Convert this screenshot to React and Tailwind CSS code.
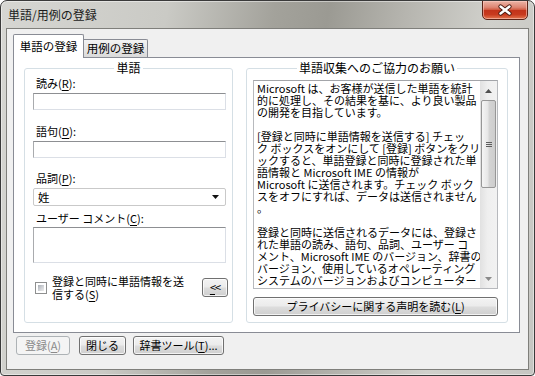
import React from 'react'

const btn =
  'flex items-center justify-center rounded-[3px] border border-[#707070] bg-[linear-gradient(to_bottom,#f3f3f3_0%,#ebebeb_48%,#dddddd_52%,#cfcfcf_100%)] shadow-[inset_0_0_0_1px_rgba(255,255,255,0.75)] text-[11px] leading-[13px] text-black'

const infoLines = [
  'Microsoft は、お客様が送信した単語を統計',
  '的に処理し、その結果を基に、より良い製品',
  'の開発を目指しています。',
  '',
  '[登録と同時に単語情報を送信する] チェッ',
  'ク ボックスをオンにして [登録] ボタンをクリ',
  'ックすると、単語登録と同時に登録された単',
  '語情報と Microsoft IME の情報が',
  'Microsoft に送信されます。チェック ボック',
  'スをオフにすれば、データは送信されません',
  '。',
  '',
  '登録と同時に送信されるデータには、登録さ',
  'れた単語の読み、語句、品詞、ユーザー コ',
  'メント、Microsoft IME のバージョン、辞書の',
  'バージョン、使用しているオペレーティング',
  'システムのバージョンおよびコンピューター',
]

function Mn({ children }) {
  return <span className="underline underline-offset-[2px]">{children}</span>
}

function GroupBox({ title, className, children }) {
  return (
    <div className={`flex flex-col rounded-[3px] border border-[#d5dfe5] ${className}`}>
      <div className="-mt-[8px] flex justify-center">
        <span className="bg-white px-[2px] text-[12px] leading-[14px]">{title}</span>
      </div>
      {children}
    </div>
  )
}

function Field({ className }) {
  return (
    <div
      className={`ml-[8px] w-[193px] border border-[#dbdfe6] border-t-[#8d8f92] border-l-[#a9abae] bg-white ${className}`}
    />
  )
}

function CloseButton() {
  return (
    <div className="mr-[6px] -mt-px flex h-[20px] w-[46px] items-center justify-center rounded-b-[5px] border border-[#5c2418] bg-[linear-gradient(to_bottom,#ecb4a6_0%,#de8673_35%,#d25c43_48%,#c2331a_52%,#c83a1e_75%,#e3764f_100%)] shadow-[inset_0_0_0_1px_rgba(255,210,200,0.55)]">
      <svg width="16" height="12" viewBox="0 0 16 12" aria-hidden="true">
        <path d="M3.5 2.5 L12.5 9.5 M12.5 2.5 L3.5 9.5" stroke="#4a1a10" strokeWidth="4.2" strokeLinecap="round" />
        <path d="M3.5 2.5 L12.5 9.5 M12.5 2.5 L3.5 9.5" stroke="#ffffff" strokeWidth="2.4" strokeLinecap="round" />
      </svg>
    </div>
  )
}

function Triangle({ down, color = '#4a4a4a' }) {
  return (
    <svg width="7" height="4" viewBox="0 0 7 4" aria-hidden="true">
      <polygon points={down ? '0,0 7,0 3.5,4' : '0,4 7,4 3.5,0'} fill={color} />
    </svg>
  )
}

function ScrollBar() {
  return (
    <div className="flex w-[17px] flex-col bg-[linear-gradient(to_right,#e1e1e1,#efefef_45%,#f2f2f2)]">
      <div className="flex h-[17px] items-center justify-center pt-[2px]">
        <Triangle color="#505050" />
      </div>
      <div className="mx-px mt-[2px] flex h-[88px] flex-col items-center justify-center gap-px rounded-[2px] border border-[#979797] bg-[linear-gradient(to_right,#f5f5f5,#e6e6e6_45%,#d4d4d4_55%,#cdcdcd)]">
        <div className="h-px w-[6px] bg-[#5e5e5e]" />
        <div className="h-px w-[6px] bg-[#5e5e5e]" />
        <div className="h-px w-[6px] bg-[#5e5e5e]" />
      </div>
      <div className="flex-1" />
      <div className="flex h-[17px] items-center justify-center pb-[2px]">
        <Triangle down color="#8a8a8a" />
      </div>
    </div>
  )
}

export default function App() {
  return (
    <div className="flex h-[376px] w-[535px] flex-col overflow-hidden rounded-t-[7px] rounded-b-[4px] border border-[#3a3a3a] bg-[linear-gradient(100deg,#d6d6d2_0%,#cacac5_28%,#a3a29b_46%,#9b9a93_55%,#b6b5af_68%,#d0d0cb_82%,#c6c6c2_100%)] font-['Noto_Sans_CJK_JP','Noto_Sans',sans-serif] text-[11px] text-black shadow-[inset_0_0_0_1px_rgba(255,255,255,0.45)]">
      <div className="flex h-[27px] shrink-0 items-start justify-between">
        <span className="pl-[7px] pt-[6px] text-[12px] leading-[16px] text-[#1b1b1b]">単語/用例の登録</span>
        <CloseButton />
      </div>

      <div className="mx-[5px] flex h-[342px] shrink-0 flex-col border border-[#7f7f7b] bg-[#f0f0f0]">
        <div className="mt-[5px] ml-[6px] flex h-[23px] items-end">
          <div className="relative z-10 -mb-px flex h-[24px] w-[71px] items-center justify-center rounded-t-[2px] border border-b-0 border-[#898c95] bg-white text-[11.5px]">
            単語の登録
          </div>
          <div className="flex h-[18px] w-[64px] items-center justify-center rounded-tr-[2px] border-t border-r border-[#898c95] bg-[linear-gradient(to_bottom,#f3f3f3,#e7e7e7_50%,#dadada)] text-[11.5px]">
            用例の登録
          </div>
        </div>

        <div className="ml-[6px] flex h-[276px] w-[507px] gap-[13px] border border-[#898c95] bg-white px-[10px] pt-[10px]">
          <GroupBox title="単語" className="h-[255px] w-[209px]">
            <div className="mt-[2px] ml-[11px] leading-[12px]">
              読み(<Mn>R</Mn>):
            </div>
            <Field className="mt-[4px] h-[17px]" />
            <div className="mt-[15px] ml-[11px] leading-[12px]">
              語句(<Mn>D</Mn>):
            </div>
            <Field className="mt-[4px] h-[17px]" />
            <div className="mt-[14px] ml-[11px] leading-[12px]">
              品詞(<Mn>P</Mn>):
            </div>
            <div className="mt-[4px] ml-[8px] flex h-[18px] w-[193px] items-center justify-between rounded-[2px] border border-[#c9c9c9] bg-white pr-[6px] pl-[4px]">
              <span className="text-[11.5px] leading-[12px]">姓</span>
              <Triangle down color="#111111" />
            </div>
            <div className="mt-[6px] ml-[11px] leading-[12px]">
              ユーザー コメント(<Mn>C</Mn>):
            </div>
            <Field className="mt-[3px] h-[36px]" />
            <div className="mt-[12px] ml-[10px] mr-[4px] flex items-start">
              <div className="mt-[7px] flex h-[12px] w-[12px] shrink-0 border border-[#8e8f8f] bg-white p-[2px]">
                <div className="flex-1 bg-[linear-gradient(135deg,#a9aeb5,#d2d4d8_55%,#ececec)]" />
              </div>
              <div className="ml-[5px] leading-[13px]">
                登録と同時に単語情報を送
                <br />
                信する(<Mn>S</Mn>)
              </div>
              <div className={`${btn} mt-[3px] ml-auto h-[19px] w-[26px] tracking-[-1px]`}>
                <Mn>&lt;</Mn>&lt;
              </div>
            </div>
          </GroupBox>

          <GroupBox title="単語収集へのご協力のお願い" className="h-[255px] w-[262px]">
            <div className="mt-[5px] ml-[6px] flex h-[209px] w-[245px] border border-[#b7b9bd] border-t-[#a3a5a9] bg-white">
              <div className="flex-1 overflow-hidden pt-px pl-[3px] text-[11px] leading-[12px] whitespace-nowrap">
                {infoLines.map((line, i) => (
                  <div key={i} className="h-[12px]">
                    {line}
                  </div>
                ))}
              </div>
              <ScrollBar />
            </div>
            <div className={`${btn} mt-[8px] ml-[6px] h-[19px] w-[245px]`}>
              プライバシーに関する声明を読む(<Mn>L</Mn>)
            </div>
          </GroupBox>
        </div>

        <div className="mt-[3px] ml-[9px] flex">
          <div className="flex h-[19px] w-[54px] items-center justify-center rounded-[3px] border border-[#adb2b5] bg-[#f4f4f4] text-[11px] text-[#8a8a8a]">
            登録(<Mn>A</Mn>)
          </div>
          <div className={`${btn} ml-[9px] h-[19px] w-[47px]`}>閉じる</div>
          <div className={`${btn} ml-[7px] h-[19px] w-[91px]`}>
            辞書ツール(<Mn>T</Mn>)...
          </div>
        </div>
      </div>
    </div>
  )
}
